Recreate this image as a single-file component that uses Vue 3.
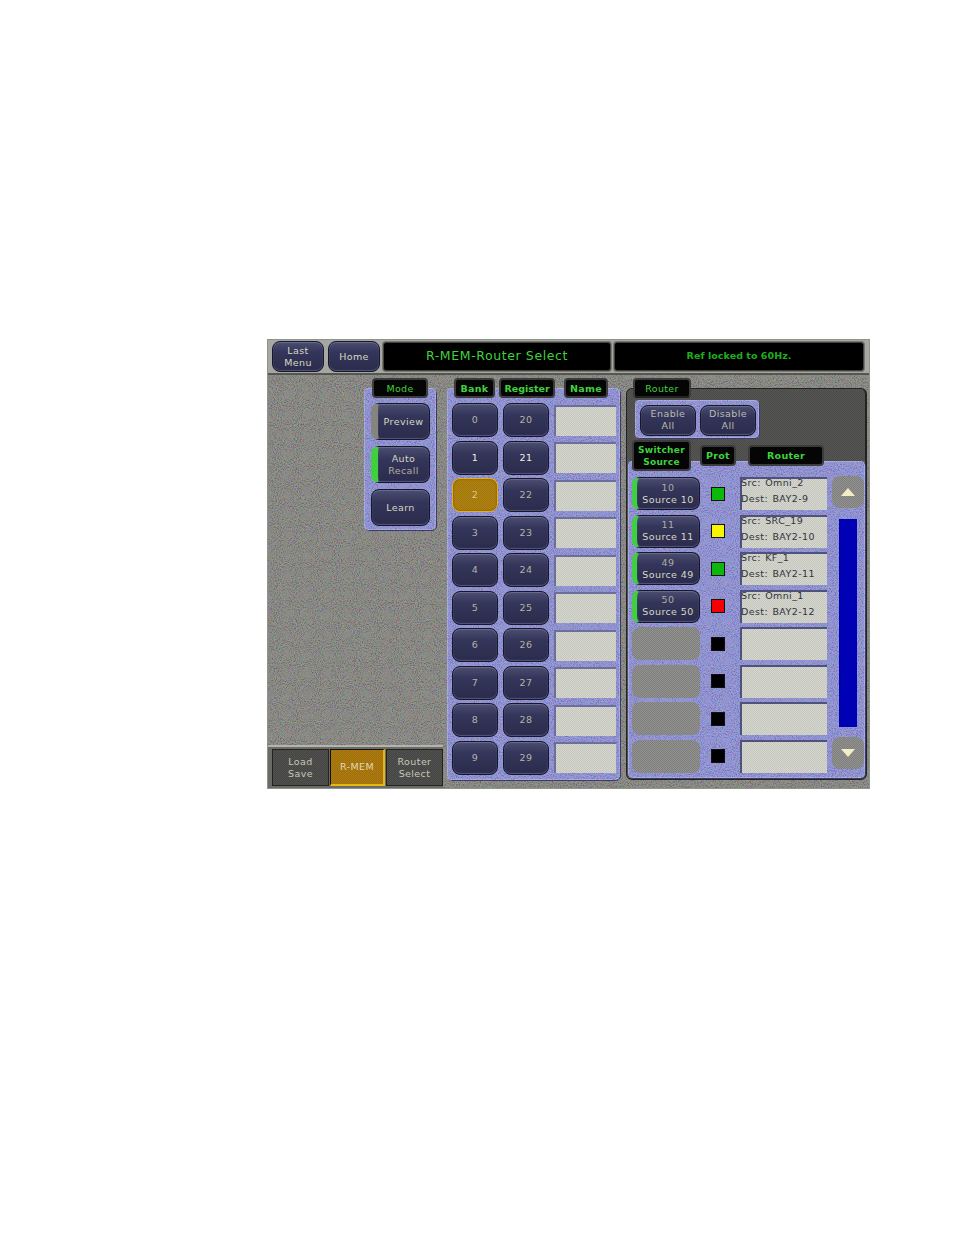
<script setup>
const rows = [0, 1, 2, 3, 4, 5, 6, 7, 8, 9]

const routes = [
  { num: '10', name: 'Source 10', prot: 'green', src: 'Omni_2', dest: 'BAY2-9' },
  { num: '11', name: 'Source 11', prot: 'yellow', src: 'SRC_19', dest: 'BAY2-10' },
  { num: '49', name: 'Source 49', prot: 'green', src: 'KF_1', dest: 'BAY2-11' },
  { num: '50', name: 'Source 50', prot: 'red', src: 'Omni_1', dest: 'BAY2-12' },
  { prot: 'black' },
  { prot: 'black' },
  { prot: 'black' },
  { prot: 'black' },
]
</script>

<template>
  <div class="page">
    <svg class="defs" width="0" height="0">
      <filter id="grain" x="0" y="0" width="100%" height="100%">
        <feTurbulence type="fractalNoise" baseFrequency="0.95" numOctaves="2" seed="4" />
        <feColorMatrix type="matrix" values="3 0 0 0 -1  0 3 0 0 -1  0 0 3 0 -1  0 0 0 0 1" />
      </filter>
    </svg>

    <div class="window">
      <div class="topbar">
        <button class="btn top-btn">Last<br />Menu</button>
        <button class="btn top-btn home">Home</button>
        <div class="display title">R-MEM-Router Select</div>
        <div class="display status">Ref locked to 60Hz.</div>
      </div>

      <div class="main">
        <svg class="grain main-grain"><rect width="100%" height="100%" filter="url(#grain)" /></svg>

        <div class="left">
          <div class="mode">
            <div class="tag mode-tag thin">Mode</div>
            <div class="panel mode-panel">
              <svg class="grain"><rect width="100%" height="100%" filter="url(#grain)" /></svg>
              <button class="btn mode-btn led off">Preview</button>
              <button class="btn mode-btn led on">Auto<br /><span class="dim">Recall</span></button>
              <button class="btn mode-btn">Learn</button>
            </div>
          </div>
          <div class="tabs">
            <div class="tab">Load<br />Save</div>
            <div class="tab active">R-MEM</div>
            <div class="tab">Router<br />Select</div>
          </div>
        </div>

        <div class="bank">
          <div class="bank-tags">
            <div class="tag t-bank">Bank</div>
            <div class="tag t-reg">Register</div>
            <div class="tag t-name">Name</div>
          </div>
          <div class="panel bank-panel">
            <svg class="grain"><rect width="100%" height="100%" filter="url(#grain)" /></svg>
            <template v-for="n in rows" :key="n">
              <button class="btn cell" :class="{ picked: n === 2, bright: n === 1 }">{{ n }}</button>
              <button class="btn cell" :class="{ bright: n === 1 }">{{ n + 20 }}</button>
              <div class="name-cell"></div>
            </template>
          </div>
        </div>

        <div class="router">
          <div class="tag t-router thin">Router</div>
          <div class="router-box">
            <div class="panel all-panel">
              <svg class="grain"><rect width="100%" height="100%" filter="url(#grain)" /></svg>
              <button class="btn all-btn">Enable<br />All</button>
              <button class="btn all-btn">Disable<br />All</button>
            </div>
            <div class="route-tags">
              <div class="tag t-switch">Switcher<br />Source</div>
              <div class="tag t-prot">Prot</div>
              <div class="tag t-dest">Router</div>
            </div>
            <div class="panel route-panel">
              <svg class="grain"><rect width="100%" height="100%" filter="url(#grain)" /></svg>
              <div class="route-rows">
                <div v-for="(r, i) in routes" :key="i" class="route">
                  <button v-if="r.num" class="btn src-btn led on">
                    <span class="dim">{{ r.num }}</span><br />{{ r.name }}
                  </button>
                  <div v-else class="src-empty"></div>
                  <span class="prot" :class="r.prot"></span>
                  <div class="info">
                    <template v-if="r.num">
                      <div class="src-line">Src:&nbsp;{{ r.src }}</div>
                      <div>Dest:&nbsp;{{ r.dest }}</div>
                    </template>
                  </div>
                </div>
              </div>
              <div class="scroll">
                <div class="arrow"><svg width="14" height="8"><path d="M7 0 14 8H0Z" fill="#f3eec8" /></svg></div>
                <div class="thumb"></div>
                <div class="arrow"><svg width="14" height="8"><path d="M0 0H14L7 8Z" fill="#f3eec8" /></svg></div>
              </div>
            </div>
          </div>
        </div>
      </div>
    </div>
  </div>
</template>

<style>
body {
  background: #fff;
}
</style>

<style scoped>
.page {
  width: 954px;
  height: 1235px;
  padding: 339px 0 0 267px;
  box-sizing: border-box;
  font-family: "DejaVu Sans", "Liberation Sans", sans-serif;
  font-size: 9.5px;
}

.defs {
  position: absolute;
}

.window {
  width: 603px;
  height: 450px;
  box-sizing: border-box;
  display: flex;
  flex-direction: column;
  border: 1px solid #8c948c;
  background: #a8a8a4;
}

.topbar {
  display: flex;
  align-items: flex-start;
  height: 35px;
  box-sizing: border-box;
  padding: 1px 0 0 4px;
  border-bottom: 2px solid #55564f;
  background: #a6a6a2;
}

.btn {
  display: block;
  margin: 0;
  padding: 0;
  font: inherit;
  letter-spacing: 0.4px;
  line-height: 12px;
  color: #d8d8c4;
  text-align: center;
  background: linear-gradient(#4b4d70, #33355a 35%, #2b2c4c);
  border: 1px solid #17172a;
  border-radius: 8px;
  box-shadow: inset 0 1px 1px #6a6c90, inset 0 -1px 1px #54567e;
}

.top-btn {
  width: 52px;
  height: 31px;
  margin-right: 4px;
}

.home {
  margin-right: 3px;
}

.display {
  height: 29px;
  margin: 1px 3px 0 0;
  box-sizing: border-box;
  background: #000;
  border: 1px solid #44443f;
  border-radius: 3px;
  box-shadow: 0 0 0 1px #77776f;
  text-align: center;
}

.title {
  width: 228px;
  color: #3fd23f;
  font-size: 12.5px;
  line-height: 26px;
  letter-spacing: 0.6px;
}

.status {
  width: 250px;
  color: #1fae1f;
  font-size: 9.5px;
  font-weight: 600;
  line-height: 26px;
  letter-spacing: 0.05px;
}

.main {
  position: relative;
  flex: 1;
  display: flex;
  min-height: 0;
  background: #7e7e79;
}

.grain {
  position: absolute;
  inset: 0;
  width: 100%;
  height: 100%;
  opacity: 0.2;
  pointer-events: none;
}

.left {
  position: relative;
  width: 178px;
  display: flex;
  flex-direction: column;
  justify-content: space-between;
}

.mode {
  padding: 3px 0 0 96px;
}

.tag {
  position: relative;
  z-index: 1;
  box-sizing: border-box;
  height: 20px;
  color: #3fd23f;
  background: #050505;
  border: 2px solid #3c3c3c;
  border-radius: 4px;
  font-size: 9.5px;
  font-weight: 700;
  line-height: 17px;
  letter-spacing: 0.3px;
  text-align: center;
}

.thin {
  font-weight: 400;
}

.mode-tag {
  width: 56px;
  margin: 0 0 -10px 8px;
}

.panel {
  position: relative;
  background: #888bd8;
  border-radius: 5px;
  box-shadow: inset 0 0 0 1px #a4a6ea, 1px 1px 0 #3a3c66;
}

.panel > .btn,
.panel > .name-cell,
.panel > .route-rows,
.panel > .scroll {
  position: relative;
}

.mode-panel {
  width: 72px;
  height: 142px;
  box-sizing: border-box;
  padding: 15px 0 0 7px;
  display: flex;
  flex-direction: column;
  gap: 6px;
}

.mode-btn {
  width: 59px;
  height: 37px;
}

.led {
  border-left: 7px solid #888;
}

.led.off {
  border-left-color: #85857f;
}

.led.on {
  border-left-color: #3fcf3f;
}

.dim {
  color: #aeae9e;
}

.tabs {
  display: flex;
  gap: 1px;
  width: 175px;
  height: 43px;
  box-sizing: border-box;
  padding: 2px 0 2px 4px;
  border-top: 2px solid #b4b4ac;
  background: #6a6a66;
}

.tab {
  width: 57px;
  display: flex;
  align-items: center;
  justify-content: center;
  text-align: center;
  color: #c8c8b8;
  line-height: 12px;
  letter-spacing: 0.4px;
  background: repeating-conic-gradient(#535351 0 25%, #434341 0 50%) 0 0 / 2px 2px;
  border: 1px solid #222;
  box-sizing: border-box;
}

.tab.active {
  width: 55px;
  color: #e0d8b8;
  background: repeating-conic-gradient(#b07c10 0 25%, #9c6e0c 0 50%) 0 0 / 2px 2px;
  border-color: #111;
  border-right: 2px solid #e6b810;
  border-bottom: 2px solid #e6b810;
}

.bank {
  position: relative;
  width: 173px;
  margin-left: 1px;
  padding-top: 3px;
}

.bank-tags {
  display: flex;
  margin-bottom: -10px;
  padding-left: 7px;
}

.t-bank {
  width: 41px;
}

.t-reg {
  width: 56px;
  margin-left: 4px;
  letter-spacing: 0;
}

.t-name {
  width: 44px;
  margin-left: 9px;
}

.bank-panel {
  height: 392px;
  box-sizing: border-box;
  padding: 15px 0 0 5px;
  display: grid;
  grid-template-columns: 46px 46px 62px;
  grid-auto-rows: 34px;
  column-gap: 5px;
  row-gap: 3.5px;
  align-items: center;
}

.cell {
  width: 46px;
  height: 34px;
  color: #b4b4a4;
}

.cell.bright {
  color: #f0f0e0;
}

.cell.picked {
  color: #d8c890;
  background: repeating-conic-gradient(#b28412 0 25%, #a0740c 0 50%) 0 0 / 2px 2px;
  border-color: #e0b020;
  box-shadow: inset 0 0 2px #6a4c00;
}

.name-cell {
  height: 31px;
  background: repeating-conic-gradient(#d6d7cf 0 25%, #c4c5bd 0 50%) 0 0 / 2px 2px;
  box-shadow: inset 2px 2px 0 #6c6e9c;
}

.router {
  position: relative;
  width: 241px;
  margin-left: 6px;
  padding-top: 3px;
}

.t-router {
  width: 58px;
  margin: 0 0 -10px 7px;
  border-bottom-color: #222;
}

.router-box {
  height: 392px;
  box-sizing: border-box;
  padding-top: 11px;
  background: repeating-conic-gradient(#565654 0 25%, #4a4a48 0 50%) 0 0 / 2px 2px;
  border: 1px solid #222;
  border-right-width: 2px;
  border-radius: 6px;
}

.all-panel {
  display: flex;
  gap: 4px;
  width: 124px;
  height: 38px;
  margin-left: 8px;
  box-sizing: border-box;
  padding: 5px 0 0 5px;
}

.all-btn {
  width: 56px;
  height: 31px;
  line-height: 12px;
  padding-bottom: 2px;
  color: #bcbcac;
}

.route-tags {
  position: relative;
  z-index: 1;
  display: flex;
  align-items: center;
  height: 31px;
  margin: 2px 0 -10px 5px;
}

.t-switch {
  width: 59px;
  height: 31px;
  line-height: 12px;
  letter-spacing: 0.3px;
  padding-top: 2px;
  font-size: 9px;
}

.t-prot {
  width: 36px;
  height: 21px;
  margin-left: 9px;
  line-height: 17px;
}

.t-dest {
  width: 76px;
  height: 21px;
  margin-left: 12px;
  line-height: 17px;
}

.route-panel {
  display: flex;
  height: 317px;
  margin: 0 0 0 1px;
  box-sizing: border-box;
  padding: 16px 0 0 4px;
}

.route-rows {
  display: grid;
  grid-auto-rows: 33px;
  row-gap: 4.5px;
}

.route {
  display: flex;
  align-items: center;
}

.src-btn,
.src-empty {
  width: 68px;
  height: 33px;
  flex: none;
  box-sizing: border-box;
}

.src-btn {
  border-left-width: 5px;
  font-size: 9.5px;
}

.src-empty {
  background: repeating-conic-gradient(#929290 0 25%, #7e7e7c 0 50%) 0 0 / 2px 2px;
  border-radius: 8px;
}

.prot {
  width: 14px;
  height: 14px;
  flex: none;
  margin: 0 15px 0 11px;
  box-sizing: border-box;
  border: 1px solid #111;
}

.prot.green {
  background: #0cb80c;
}

.prot.yellow {
  background: #f6f600;
}

.prot.red {
  background: #f40000;
}

.prot.black {
  background: #000;
}

.info {
  width: 87px;
  height: 33px;
  flex: none;
  box-sizing: border-box;
  overflow: hidden;
  padding-left: 1px;
  color: #33333a;
  font-size: 9.5px;
  line-height: 16px;
  letter-spacing: 0.4px;
  white-space: nowrap;
  word-spacing: 1px;
  background: repeating-conic-gradient(#d6d7cf 0 25%, #c4c5bd 0 50%) 0 0 / 2px 2px;
  box-shadow: inset 2px 2px 0 #50527e;
}

.src-line {
  margin-top: -2px;
}

.scroll {
  display: flex;
  flex-direction: column;
  align-items: center;
  width: 32px;
  margin: -1px 0 0 5px;
}

.arrow {
  width: 32px;
  height: 32px;
  flex: none;
  display: flex;
  align-items: center;
  justify-content: center;
  background: repeating-conic-gradient(#929290 0 25%, #7e7e7c 0 50%) 0 0 / 2px 2px;
  border-radius: 8px;
}

.thumb {
  width: 18px;
  height: 208px;
  margin: 11px 0 10px;
  background: #0000b4;
}
</style>
